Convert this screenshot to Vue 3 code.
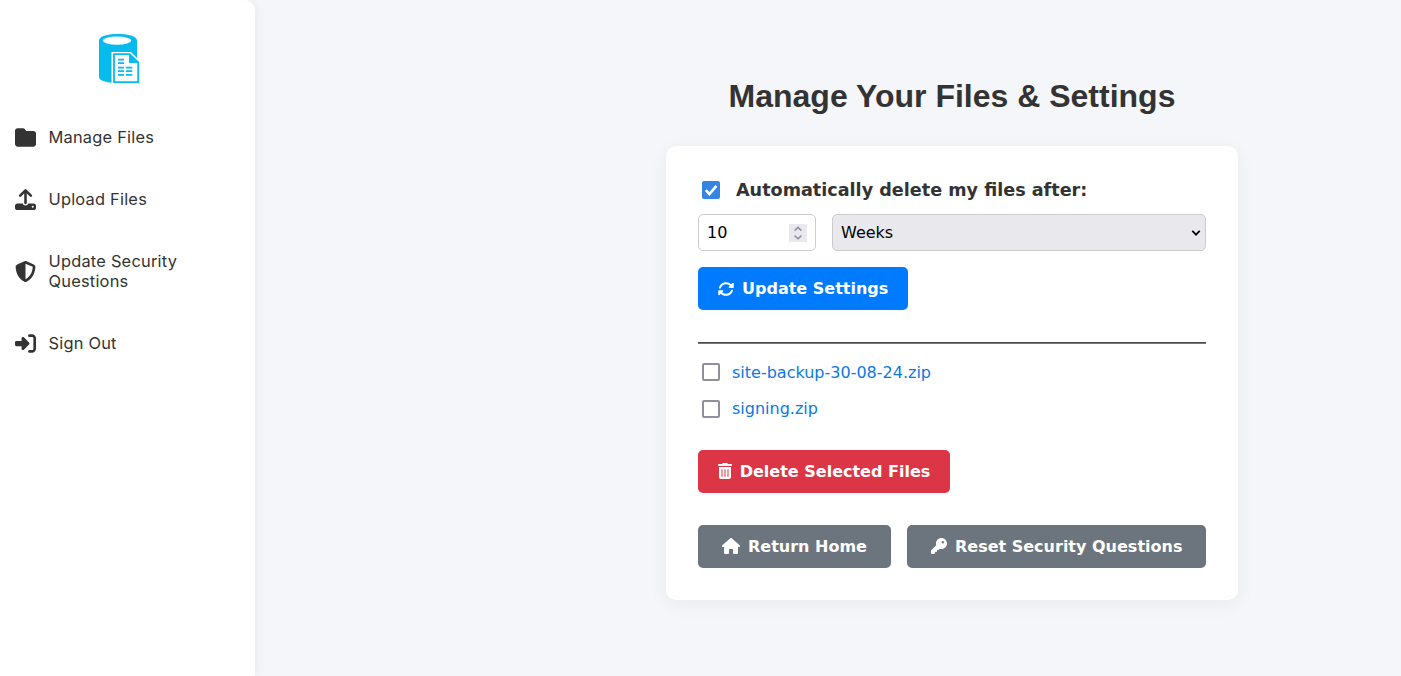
<script setup>
import { ref } from 'vue'

const autoDelete = ref(true)
const amount = ref('10')
const unit = ref('Weeks')
const files = ref([
  { name: 'site-backup-30-08-24.zip', selected: false },
  { name: 'signing.zip', selected: false },
])
</script>

<template>
  <div class="page">
    <aside class="sidebar">
      <svg class="logo" viewBox="0 0 42 50" aria-hidden="true">
        <path fill="#07bbed" d="M1 6.5C1 -2.3 39 -2.3 39 6.5V44C37 51 1 51 1 43Z" />
        <ellipse cx="19" cy="6.6" rx="14.2" ry="4.2" fill="#fff" />
        <path fill="#fff" d="M13.5 18H33L42 27V50H13.5Z" />
        <path fill="#fff" stroke="#07bbed" stroke-width="1.8" d="M16 20.2H31.6L40.2 28.4V48.2H16Z" />
        <path fill="#07bbed" d="M31 20V29H40.5Z" />
        <path stroke="#07bbed" stroke-width="1.8" d="M20 25.7h6M20 29.2h6M20 33.6h6M27.8 33.6h6.5M20 37.2h6M27.8 37.2h6.5M20 40.8h6M27.8 40.8h6.5" />
      </svg>
      <nav>
        <a href="#">
          <svg viewBox="0 0 512 512"><path d="M64 480H448c35.3 0 64-28.7 64-64V160c0-35.3-28.7-64-64-64H288c-10.1 0-19.6-4.7-25.6-12.8L243.2 57.6C231.1 41.5 212.1 32 192 32H64C28.7 32 0 60.7 0 96V416c0 35.3 28.7 64 64 64z" /></svg>
          <span>Manage Files</span>
        </a>
        <a href="#">
          <svg viewBox="0 0 512 512">
            <path d="M256 340V38M126 162L256 34L386 162" fill="none" stroke="#333" stroke-width="62" stroke-linecap="round" stroke-linejoin="round" />
            <path fill-rule="evenodd" d="M64 352H192V354A64 50 0 0 0 320 354V352H448A64 64 0 0 1 512 416V448A64 64 0 0 1 448 512H64A64 64 0 0 1 0 448V416A64 64 0 0 1 64 352ZM432 408a24 24 0 1 0 0 48a24 24 0 1 0 0-48Z" />
          </svg>
          <span>Upload Files</span>
        </a>
        <a href="#">
          <svg viewBox="0 0 512 512"><path d="M256 0c4.6 0 9.2 1 13.4 2.9L457.7 82.8c22 9.3 38.4 31 38.3 57.2c-.5 99.2-41.3 280.7-213.6 363.2c-16.7 8-36.1 8-52.8 0C57.3 420.7 16.5 239.2 16 140c-.1-26.2 16.3-47.9 38.3-57.2L242.7 2.9C246.8 1 251.4 0 256 0zm0 66.8V444.8C394 378 431.1 230.1 432 141.4L256 66.8z" /></svg>
          <span>Update Security Questions</span>
        </a>
        <a href="#">
          <svg viewBox="0 0 512 512"><path d="M217.9 105.9L340.7 228.7c7.2 7.2 11.3 17.1 11.3 27.3s-4.1 20.1-11.3 27.3L217.9 406.1c-6.4 6.4-15 9.9-24 9.9c-18.7 0-33.9-15.2-33.9-33.9l0-62.1L32 320c-17.7 0-32-14.3-32-32l0-64c0-17.7 14.3-32 32-32l128 0 0-62.1c0-18.7 15.2-33.9 33.9-33.9c9 0 17.6 3.6 24 9.9zM352 416l64 0c17.7 0 32-14.3 32-32l0-256c0-17.7-14.3-32-32-32l-64 0c-17.7 0-32-14.3-32-32s14.3-32 32-32l64 0c53 0 96 43 96 96l0 256c0 53-43 96-96 96l-64 0c-17.7 0-32-14.3-32-32s14.3-32 32-32z" /></svg>
          <span>Sign Out</span>
        </a>
      </nav>
    </aside>

    <main>
      <h1>Manage Your Files &amp; Settings</h1>
      <section class="card">
        <label class="auto">
          <input v-model="autoDelete" class="check" type="checkbox" />
          <svg class="tick" viewBox="0 0 18 18"><path d="M3.8 9.2L7.4 13L14.4 4.8" /></svg>
          <span>Automatically delete my files after:</span>
        </label>

        <div class="fields">
          <div class="number">
            <input v-model="amount" type="text" inputmode="numeric" />
            <span class="spin">
              <svg viewBox="0 0 18 18"><path d="M5.6 6.6L9 3.4L12.4 6.6M5.6 11.6L9 14.8L12.4 11.6" /></svg>
            </span>
          </div>
          <div class="select">
            <span>{{ unit }}</span>
            <svg viewBox="0 0 10 6"><path d="M1.3 0.9L5 4.7L8.7 0.9" /></svg>
          </div>
        </div>

        <button class="btn primary">
          <svg width="16" height="16" viewBox="0 0 512 512">
            <path id="turn" d="M30 226C52 110 140 38 256 38C322 38 380 64 424 106L464 66C480 52 504 60 504 80V204C504 214 498 220 488 220H362C342 220 334 200 348 186L378 154C346 124 304 106 256 106C178 106 112 154 94 226C92 232 88 236 82 236H40C32 236 28 232 30 226Z" />
            <use href="#turn" transform="rotate(180 256 256)" />
          </svg>
          Update Settings
        </button>

        <hr />

        <ul>
          <li v-for="file in files" :key="file.name">
            <input v-model="file.selected" class="check" type="checkbox" />
            <a href="#">{{ file.name }}</a>
          </li>
        </ul>

        <button class="btn danger">
          <svg width="14" height="16" viewBox="0 0 448 512"><path d="M135.2 17.7L128 32H32C14.3 32 0 46.3 0 64S14.3 96 32 96H416c17.7 0 32-14.3 32-32s-14.3-32-32-32H320l-7.2-14.3C307.4 6.8 296.3 0 284.2 0H163.8c-12.1 0-23.2 6.8-28.6 17.7zM32 128V448c0 35.3 28.7 64 64 64H352c35.3 0 64-28.7 64-64V128H32zm96 64c8.8 0 16 7.2 16 16V432c0 8.8-7.2 16-16 16s-16-7.2-16-16V208c0-8.8 7.2-16 16-16zm96 0c8.8 0 16 7.2 16 16V432c0 8.8-7.2 16-16 16s-16-7.2-16-16V208c0-8.8 7.2-16 16-16zm96 0c8.8 0 16 7.2 16 16V432c0 8.8-7.2 16-16 16s-16-7.2-16-16V208c0-8.8 7.2-16 16-16z" /></svg>
          Delete Selected Files
        </button>

        <div class="links">
          <button class="btn secondary">
            <svg width="18" height="16" viewBox="0 0 576 512"><path d="M575.8 255.5c0 18-15 32.1-32 32.1h-32l.7 160.2c0 2.7-.2 5.4-.5 8.1V472c0 22.1-17.9 40-40 40H456c-1.1 0-2.2 0-3.3-.1c-1.4 .1-2.8 .1-4.2 .1H416 392c-22.1 0-40-17.9-40-40V448 384c0-17.7-14.3-32-32-32H256c-17.7 0-32 14.3-32 32v64 24c0 22.1-17.9 40-40 40H160 128.1c-1.5 0-3-.1-4.5-.2c-1.2 .1-2.4 .2-3.6 .2H104c-22.1 0-40-17.9-40-40V360c0-.9 0-1.9 .1-2.8V287.6H32c-18 0-32-14-32-32.1c0-9 3-17 10-24L266.4 8c7-7 15-8 22-8s15 2 21 7L564.8 231.5c8 7 12 15 11 24z" /></svg>
            Return Home
          </button>
          <button class="btn secondary">
            <svg width="16" height="16" viewBox="0 0 512 512"><path d="M336 352c97.2 0 176-78.8 176-176S433.2 0 336 0S160 78.8 160 176c0 18.7 2.9 36.8 8.3 53.7L7 391c-4.5 4.5-7 10.6-7 17v80c0 13.3 10.7 24 24 24h80c13.3 0 24-10.7 24-24V448h40c13.3 0 24-10.7 24-24V384h40c6.4 0 12.5-2.5 17-7l33.3-33.3c16.9 5.4 35 8.3 53.7 8.3zM376 96a40 40 0 1 1 0 80 40 40 0 1 1 0-80z" /></svg>
            Reset Security Questions
          </button>
        </div>
      </section>
    </main>
  </div>
</template>

<style>
body {
  background: #f4f6fa;
}
</style>

<style scoped>
* {
  box-sizing: border-box;
}
.page {
  display: flex;
  height: 676px;
  overflow: hidden;
  color: #333;
  font: 16px "DejaVu Sans", sans-serif;
}
.sidebar {
  width: 255px;
  height: 100%;
  padding: 34px 15px 0;
  background: #fff;
  border-radius: 0 10px 0 0;
  box-shadow: 2px 0 10px rgba(0, 0, 0, 0.05);
}
.logo {
  display: block;
  width: 42px;
  height: 50px;
  margin: 0 0 43px 83px;
}
nav {
  display: flex;
  flex-direction: column;
  gap: 42px;
}
nav a {
  display: flex;
  align-items: center;
  gap: 12.5px;
  color: #333;
  font: 16.4px/20px Inter, sans-serif;
  letter-spacing: 0.22px;
  text-decoration: none;
}
nav svg {
  flex: none;
  width: 21px;
  height: 21px;
  margin: -1px 0;
  fill: #333;
}
nav span {
  width: 150px;
}
main {
  width: 572px;
  margin-left: 411px;
  padding-top: 78px;
}
h1 {
  margin: 0 0 32px;
  font: bold 32px/36px "Liberation Sans", sans-serif;
  text-align: center;
}
.card {
  height: 454px;
  padding: 32px;
  background: #fff;
  border-radius: 10px;
  box-shadow: 0 4px 20px rgba(0, 0, 0, 0.05);
}
.check {
  appearance: none;
  flex: none;
  width: 18px;
  height: 18px;
  margin: 0 0 0 4px;
  border: 2px solid #8f8f9d;
  border-radius: 2px;
  background: #fff;
}
.check:checked {
  border-color: #3584e4;
  background: #3584e4;
}
.auto {
  position: relative;
  display: flex;
  align-items: center;
  gap: 16px;
  height: 24px;
  font-size: 17.6px;
  font-weight: bold;
}
.tick {
  position: absolute;
  left: 4px;
  top: 3px;
  width: 18px;
  height: 18px;
  fill: none;
  stroke: #fff;
  stroke-width: 2.6;
}
.fields {
  display: grid;
  grid-template-columns: 118px 1fr;
  gap: 16px;
  margin: 12px 0 16px;
  color: #000;
}
.number,
.select {
  display: flex;
  align-items: center;
  justify-content: space-between;
  height: 37px;
  padding: 0 8px;
  border: 1px solid #ccc;
  border-radius: 5px;
}
.select {
  padding-right: 4px;
  background: #e9e9ed;
}
.number input {
  width: 70px;
  padding: 0;
  border: 0;
  outline: 0;
  background: none;
  font: inherit;
}
.spin {
  width: 18px;
  height: 18px;
  background: #e9e9ed;
}
.spin svg {
  display: block;
  fill: none;
  stroke: #8f8f9d;
  stroke-width: 1.5;
}
.select svg {
  width: 10px;
  height: 6px;
  fill: none;
  stroke: #000;
  stroke-width: 1.7;
}
.btn {
  display: inline-flex;
  align-items: center;
  justify-content: center;
  gap: 8px;
  height: 43px;
  padding: 0 20px;
  border: 0;
  border-radius: 5px;
  color: #fff;
  font: bold 16px "DejaVu Sans", sans-serif;
  white-space: nowrap;
}
.btn svg {
  flex: none;
  margin-bottom: 1px;
  fill: #fff;
}
.primary {
  display: flex;
  background: #007bff;
}
.danger {
  display: flex;
  width: 252px;
  background: #dc3545;
}
.secondary {
  padding: 0 24px;
  background: #6c757d;
}
.btn.primary svg {
  margin-bottom: 0;
}
hr {
  height: 2px;
  margin: 32px 0 18.5px;
  border: 0;
  border-top: 1px solid #4d4d4d;
  border-bottom: 1px solid #777;
}
ul {
  display: grid;
  gap: 17px;
  margin: 0 0 31px;
  padding: 0;
  list-style: none;
}
li {
  display: flex;
  align-items: center;
  gap: 12px;
  height: 19.5px;
}
li a {
  color: #0b78e3;
  text-decoration: none;
}
.links {
  display: flex;
  gap: 16px;
  margin-top: 32px;
}
</style>
